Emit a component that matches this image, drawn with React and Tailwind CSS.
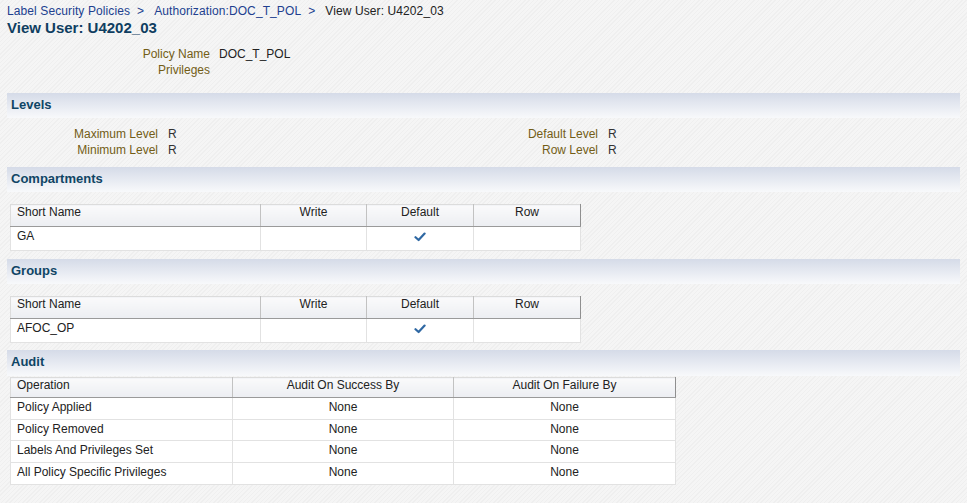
import { useState } from 'react';

const labelCls = 'text-[#735d16]';

const Check = () => (
  <svg width="12" height="10" viewBox="0 0 12 10" className="inline-block">
    <path d="M1.5 5.2 L4.6 8 L10.6 1.6" fill="none" stroke="#2f68a3" strokeWidth="2.2" strokeLinecap="round" strokeLinejoin="round" />
  </svg>
);

const SectionBar = ({ title, className = '' }) => (
  <div
    className={`mx-[7px] flex h-[25px] items-center bg-gradient-to-b from-[#d5dbe8] to-[#f8f9fb] pb-[2px] pl-[4px] text-[13px] font-bold text-[#0f4565] ${className}`}
  >
    {title}
  </div>
);

const HeadCell = ({ children, align = 'center', last = false, h = 'h-[22px]' }) => (
  <th
    className={`${h} border-b border-b-[#9a9a9a] border-r bg-gradient-to-b from-[#fafafb] to-[#eceef2] px-[6px] py-0 align-top font-normal leading-[14px] text-[#222] ${
      last ? 'border-r-[#8f8f8f]' : 'border-r-[#c2c2c2]'
    } ${align === 'left' ? 'text-left' : 'text-center'}`}
  >
    {children}
  </th>
);

const Cell = ({ children, align = 'center', h = 'h-[24px]' }) => (
  <td
    className={`${h} border border-[#e2e2e2] bg-white px-[6px] pt-[2px] align-top leading-[14px] text-[#222] ${
      align === 'left' ? 'text-left' : 'text-center'
    }`}
  >
    {children}
  </td>
);

const PrivTable = ({ name }) => (
  <table className="ml-[10px] w-[570px] table-fixed border-collapse border border-[#dcdcdc] text-[12px]">
    <colgroup>
      <col className="w-[250px]" />
      <col className="w-[106px]" />
      <col className="w-[107px]" />
      <col className="w-[107px]" />
    </colgroup>
    <thead>
      <tr>
        <HeadCell align="left">Short Name</HeadCell>
        <HeadCell>Write</HeadCell>
        <HeadCell>Default</HeadCell>
        <HeadCell last>Row</HeadCell>
      </tr>
    </thead>
    <tbody>
      <tr>
        <Cell align="left">{name}</Cell>
        <Cell />
        <Cell>
          <Check />
        </Cell>
        <Cell />
      </tr>
    </tbody>
  </table>
);

const auditRows = [
  'Policy Applied',
  'Policy Removed',
  'Labels And Privileges Set',
  'All Policy Specific Privileges',
];

export default function App() {
  const [rows] = useState(auditRows);

  return (
    <div
      className="min-h-[503px] w-[967px] bg-[#f3f3f3] bg-[repeating-linear-gradient(135deg,#f5f5f5_0px,#f5f5f5_2px,#efefef_2px,#efefef_3px)] pt-[4px] text-[12px] leading-[14px] text-[#333]"
      style={{ fontFamily: '"Liberation Sans", Arial, sans-serif' }}
    >
      <div className="flex items-center pl-[7px] text-[12px] leading-[14px] tracking-[0.1px]">
        <span className="text-[#213f8f]">Label Security Policies</span>
        <span className="pl-[7px] pr-[10px] text-[#213f8f]">&gt;</span>
        <span className="text-[#213f8f]">Authorization:DOC_T_POL</span>
        <span className="pl-[7px] pr-[10px] text-[#213f8f]">&gt;</span>
        <span className="text-[#222]">View User: U4202_03</span>
      </div>
      <h1 className="mt-[1px] pl-[7px] text-[15px] font-bold leading-[18px] text-[#0f3e61]">View User: U4202_03</h1>

      <div className="mt-[9px] grid grid-cols-[210px_1fr] gap-x-[9px] leading-[16px]">
        <div className={`text-right ${labelCls}`}>Policy Name</div>
        <div className="text-[#222]">DOC_T_POL</div>
        <div className={`text-right ${labelCls}`}>Privileges</div>
        <div />
      </div>

      <SectionBar title="Levels" className="mt-[15px]" />
      <div className="mt-[8px] flex leading-[16px]">
        <div className="grid w-[485px] grid-cols-[158px_1fr] gap-x-[10px]">
          <div className={`text-right ${labelCls}`}>Maximum Level</div>
          <div className="text-[#333]">R</div>
          <div className={`text-right ${labelCls}`}>Minimum Level</div>
          <div className="text-[#333]">R</div>
        </div>
        <div className="grid grid-cols-[113px_1fr] gap-x-[10px]">
          <div className={`text-right ${labelCls}`}>Default Level</div>
          <div className="text-[#333]">R</div>
          <div className={`text-right ${labelCls}`}>Row Level</div>
          <div className="text-[#333]">R</div>
        </div>
      </div>

      <SectionBar title="Compartments" className="mt-[9px]" />
      <div className="mt-[12px]">
        <PrivTable name="GA" />
      </div>

      <SectionBar title="Groups" className="mt-[8px]" />
      <div className="mt-[12px]">
        <PrivTable name="AFOC_OP" />
      </div>

      <SectionBar title="Audit" className="mt-[7px] h-[26px]" />
      <table className="ml-[10px] mt-[1px] w-[665px] table-fixed border-collapse border border-[#dcdcdc] text-[12px]">
        <colgroup>
          <col className="w-[222px]" />
          <col className="w-[221px]" />
          <col className="w-[222px]" />
        </colgroup>
        <thead>
          <tr>
            <HeadCell align="left" h="h-[20px]">Operation</HeadCell>
            <HeadCell h="h-[20px]">Audit On Success By</HeadCell>
            <HeadCell last h="h-[20px]">Audit On Failure By</HeadCell>
          </tr>
        </thead>
        <tbody>
          {rows.map((op) => (
            <tr key={op}>
              <Cell align="left" h="h-[21.7px]">{op}</Cell>
              <Cell h="h-[21.7px]">None</Cell>
              <Cell h="h-[21.7px]">None</Cell>
            </tr>
          ))}
        </tbody>
      </table>
    </div>
  );
}
